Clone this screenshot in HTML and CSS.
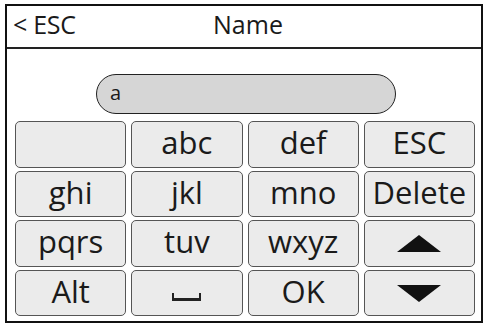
FILE: index.html
```html
<!DOCTYPE html>
<html lang="en">
<head>
    <meta charset="UTF-8">
    <meta name="viewport" content="width=device-width, initial-scale=1.0">
    <title>Name</title>
    <link rel="stylesheet" href="styles.css">
</head>
<body>
    <div class="screen">
        <!-- Title bar -->
        <div class="title-bar">
            <a href="#" class="back-link">&lt; ESC</a>
            <span class="title">Name</span>
            <span></span>
        </div>

        <!-- Input + keypad -->
        <div class="input-area">
            <div class="input-pill">a</div>

            <div class="keypad">
                <button class="key"></button>
                <button class="key">abc</button>
                <button class="key">def</button>
                <button class="key">ESC</button>

                <button class="key">ghi</button>
                <button class="key">jkl</button>
                <button class="key">mno</button>
                <button class="key">Delete</button>

                <button class="key">pqrs</button>
                <button class="key">tuv</button>
                <button class="key">wxyz</button>
                <button class="key"><span class="arrow arrow-up"></span></button>

                <button class="key">Alt</button>
                <button class="key"><span class="space-mark"></span></button>
                <button class="key">OK</button>
                <button class="key"><span class="arrow arrow-down"></span></button>
            </div>
        </div>
    </div>
</body>
</html>
```

FILE: styles.css
```css
* {
    margin: 0;
    padding: 0;
    box-sizing: border-box;
}

body {
    font-family: "Open Sans", "Noto Sans", sans-serif;
    background: #fff;
    color: #1a1a1a;
}

.screen {
    width: 478px;
    height: 319px;
    margin: 4px 0 0 5px;
    border: 2px solid #111;
    display: flex;
    flex-direction: column;
}

/* Title bar */
.title-bar {
    height: 43px;
    border-bottom: 2px solid #222;
    display: grid;
    grid-template-columns: 1fr auto 1fr;
    align-items: center;
    padding: 0 6px 5px;
}

.back-link {
    font-size: 25px;
    color: #1a1a1a;
    text-decoration: none;
    letter-spacing: -0.3px;
}

.title {
    font-size: 25px;
    padding-left: 8px;
}

/* Input area */
.input-area {
    flex: 1;
    padding: 25px 6px 5px 8px;
    display: flex;
    flex-direction: column;
}

.input-pill {
    width: 300px;
    height: 40px;
    margin-left: 81px;
    background: #d6d6d6;
    border: 1.5px solid #222;
    border-radius: 20px;
    font-size: 20px;
    line-height: 36px;
    padding-left: 13px;
}

.keypad {
    margin-top: 7px;
    flex: 1;
    display: grid;
    grid-template-columns: repeat(4, 1fr);
    grid-template-rows: repeat(4, 1fr);
    gap: 3px 5px;
}

.key {
    font-family: inherit;
    font-size: 31px;
    color: #1a1a1a;
    background: #ebebeb;
    border: 1px solid #555;
    border-radius: 5px;
    display: flex;
    align-items: center;
    justify-content: center;
    line-height: 1;
    padding-bottom: 3px;
}

.arrow {
    width: 0;
    height: 0;
    border-left: 22px solid transparent;
    border-right: 22px solid transparent;
}

.arrow-up {
    border-bottom: 17px solid #111;
    margin-top: 4px;
}

.arrow-down {
    border-top: 17px solid #111;
    margin-top: 4px;
}

.space-mark {
    width: 29px;
    height: 8px;
    border: 2.5px solid #222;
    border-top: none;
    border-bottom-width: 3px;
    margin-top: 12px;
}
```
